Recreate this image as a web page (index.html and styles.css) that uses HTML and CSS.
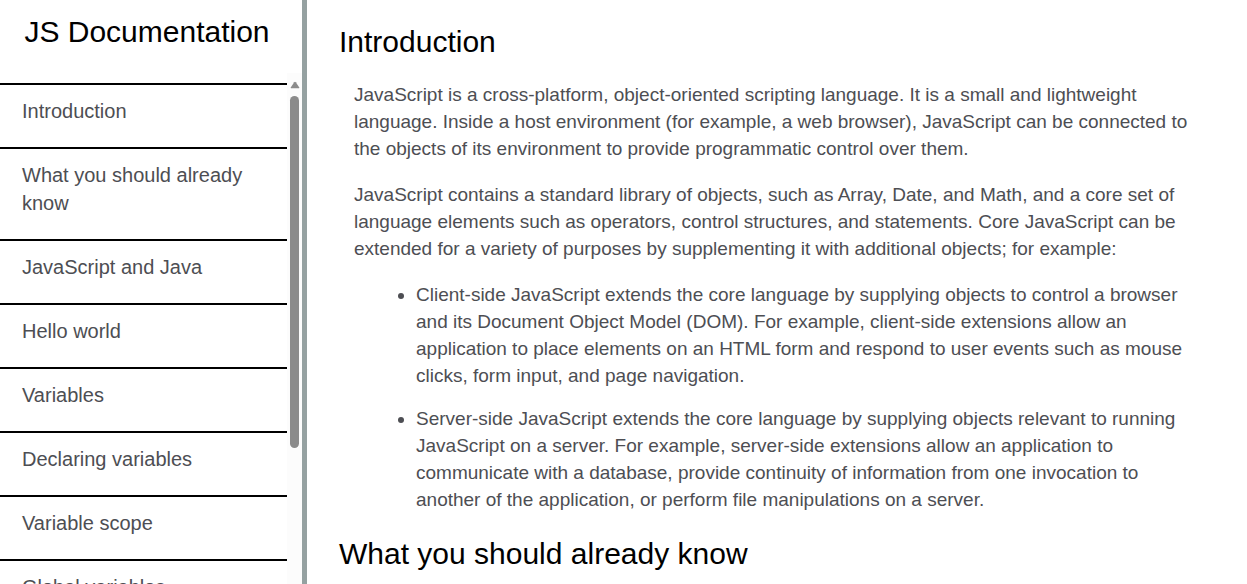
FILE: index.html
```html
<!DOCTYPE html>
<html lang="en">
<head>
<meta charset="utf-8">
<meta name="viewport" content="width=device-width, initial-scale=1">
<title>JS Documentation</title>
<link rel="stylesheet" href="styles.css">
</head>
<body>
<nav class="navbar">
  <header class="navbar-title">JS Documentation</header>
  <div class="navbar-scroll">
    <div class="nav-list">
      <a class="nav-link" href="#introduction">Introduction</a>
      <a class="nav-link" href="#what_you_should_already_know">What you should already know</a>
      <a class="nav-link" href="#javascript_and_java">JavaScript and Java</a>
      <a class="nav-link" href="#hello_world">Hello world</a>
      <a class="nav-link" href="#variables">Variables</a>
      <a class="nav-link" href="#declaring_variables">Declaring variables</a>
      <a class="nav-link" href="#variable_scope">Variable scope</a>
      <a class="nav-link" href="#global_variables">Global variables</a>
    </div>
    <div class="scrollbar" aria-hidden="true">
      <svg class="scroll-arrow" viewBox="0 0 10 8"><path d="M4.2 1.2 Q5 0.4 5.8 1.2 L9.3 6.4 Q9.6 7.2 8.8 7.2 H1.2 Q0.4 7.2 0.7 6.4 Z"/></svg>
      <div class="scroll-thumb"></div>
    </div>
  </div>
</nav>
<main class="main-doc">
  <section class="main-section" id="introduction">
    <header class="section-title">Introduction</header>
    <article class="section-body">
      <p>JavaScript is a cross-platform, object-oriented scripting language. It is a small and lightweight language. Inside a host environment (for example, a web browser), JavaScript can be connected to the objects of its environment to provide programmatic control over them.</p>
      <p>JavaScript contains a standard library of objects, such as Array, Date, and Math, and a core set of language elements such as operators, control structures, and statements. Core JavaScript can be extended for a variety of purposes by supplementing it with additional objects; for example:</p>
      <ul>
        <li>Client-side JavaScript extends the core language by supplying objects to control a browser and its Document Object Model (DOM). For example, client-side extensions allow an application to place elements on an HTML form and respond to user events such as mouse clicks, form input, and page navigation.</li>
        <li>Server-side JavaScript extends the core language by supplying objects relevant to running JavaScript on a server. For example, server-side extensions allow an application to communicate with a database, provide continuity of information from one invocation to another of the application, or perform file manipulations on a server.</li>
      </ul>
    </article>
  </section>
  <section class="main-section" id="what_you_should_already_know">
    <header class="section-title">What you should already know</header>
  </section>
</main>
</body>
</html>
```
FILE: styles.css
```css
* {
  box-sizing: border-box;
}

body {
  margin: 0;
  height: 100vh;
  overflow: hidden;
  display: flex;
  font-family: "Liberation Sans", Arial, sans-serif;
  color: #4d4e53;
  background: #fff;
}

.navbar {
  flex: 0 0 307px;
  display: flex;
  flex-direction: column;
  border-right: 5px solid #95a1a1;
}

.navbar-title {
  padding: 14px 10px 24px 2px;
  text-align: center;
  font-size: 30px;
  line-height: 35px;
  color: #000;
}

.navbar-scroll {
  flex: 1;
  min-height: 0;
  display: flex;
  overflow: hidden;
}

.nav-list {
  flex: 1;
  padding-top: 10px;
}

.nav-link {
  display: block;
  padding: 12px 30px 22px 22px;
  border-top: 2px solid #000;
  font-size: 20px;
  line-height: 28px;
  color: #4d4e53;
  text-decoration: none;
}

.scrollbar {
  flex: 0 0 15px;
  display: flex;
  flex-direction: column;
  align-items: center;
  padding-top: 8px;
  background: #fcfcfc;
}

.scroll-arrow {
  flex: none;
  width: 10px;
  height: 8px;
  margin-bottom: 7px;
  fill: #8b8b8b;
}

.scroll-thumb {
  width: 9px;
  height: 70%;
  border-radius: 5px;
  background: #8b8b8b;
}

.main-doc {
  flex: 1;
  min-width: 0;
  padding: 24px 40px 0 32px;
}

.section-title {
  font-size: 30px;
  line-height: 35px;
  color: #000;
}

.section-body {
  padding: 22px 0 23px 15px;
  font-size: 19px;
  line-height: 27px;
}

.section-body p {
  margin: 0 0 19px;
}

.section-body ul {
  margin: 0;
  padding-left: 62px;
}

.section-body li + li {
  margin-top: 16px;
}
```
